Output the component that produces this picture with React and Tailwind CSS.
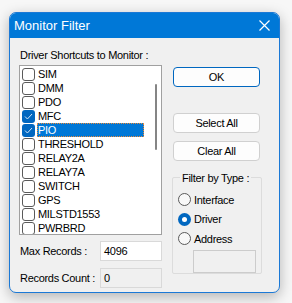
const drivers = [
  { name: "SIM" },
  { name: "DMM" },
  { name: "PDO" },
  { name: "MFC", checked: true },
  { name: "PIO", checked: true, selected: true },
  { name: "THRESHOLD" },
  { name: "RELAY2A" },
  { name: "RELAY7A" },
  { name: "SWITCH" },
  { name: "GPS" },
  { name: "MILSTD1553" },
  { name: "PWRBRD" },
];

function CheckBox({ checked }) {
  if (checked) {
    return (
      <div className="w-[13px] h-[13px] shrink-0 rounded-[3px] bg-[#0067c0] flex items-center justify-center">
        <svg width="9" height="7" viewBox="0 0 9 7">
          <path d="M1 3.5 L3.4 6 L8 1" fill="none" stroke="#cfe3f5" strokeWidth="1" />
        </svg>
      </div>
    );
  }
  return <div className="w-[13px] h-[13px] shrink-0 rounded-[3px] border border-[#5a5a5a] bg-white" />;
}

function Radio({ label, checked }) {
  return (
    <div className="flex items-center h-[19.5px]">
      {checked ? (
        <div className="w-[13px] h-[13px] rounded-full bg-[#0067c0] flex items-center justify-center">
          <div className="w-[5px] h-[5px] rounded-full bg-white" />
        </div>
      ) : (
        <div className="w-[13px] h-[13px] rounded-full border border-[#5a5a5a] bg-[#f8f8f8]" />
      )}
      <span className="ml-[3px]">{label}</span>
    </div>
  );
}

function Btn({ children, primary, className = "" }) {
  return (
    <div
      className={`h-[20px] w-[87px] rounded-[4px] flex items-center justify-center bg-[#fdfdfd] ${
        primary ? "border-[1.5px] border-[#0067c0]" : "border border-[#d0d0d0]"
      } ${className}`}
    >
      {children}
    </div>
  );
}

export default function App() {
  return (
    <div
      className="w-[292px] h-[303px] bg-[#f7f7f7] pt-[12px] pl-[9px] text-[11px] tracking-[-0.3px] whitespace-nowrap text-black leading-[14px]"
      style={{ fontFamily: '"Liberation Sans", Arial, sans-serif' }}
    >
      <div className="w-[271px] h-[281px] rounded-[7px] border border-[#1b79d6] bg-[#f0f0f0] overflow-hidden shadow-[0_4px_14px_rgba(0,0,0,0.28)]">
        {/* Title bar */}
        <div className="h-[25px] bg-[#0078d7] flex items-center justify-between pl-[4px] pr-[9px] text-white text-[13px] tracking-normal">
          <span>Monitor Filter</span>
          <svg width="11" height="11" viewBox="0 0 11 11">
            <path d="M0.5 0.5 L10.5 10.5 M10.5 0.5 L0.5 10.5" stroke="white" strokeWidth="1.2" />
          </svg>
        </div>

        <div className="flex pl-[9px]">
          {/* Left column */}
          <div className="w-[143px]">
            <div className="mt-[10px] pl-[1px] h-[14px]">Driver Shortcuts to Monitor :</div>
            <div className="mt-[3px] h-[170px] border border-[#a0a0a0] bg-white flex overflow-hidden">
              <div className="flex-1 pl-[2px] pt-[1px]">
                {drivers.map((d) => (
                  <div key={d.name} className="h-[14px] flex items-center">
                    <CheckBox checked={d.checked} />
                    <span
                      className={`ml-[2px] h-[14px] flex items-center pl-[1px] ${
                        d.selected
                          ? "w-[107px] bg-[#0078d7] text-white outline-dotted outline-1 outline-[#e98a3a] -outline-offset-1"
                          : ""
                      }`}
                    >
                      {d.name}
                    </span>
                  </div>
                ))}
              </div>
              <div className="w-[10px] pt-[18px] flex justify-center">
                <div className="w-[2px] h-[66px] rounded-full bg-[#858585]" />
              </div>
            </div>
            <div className="mt-[6px] h-[20px] flex items-center">
              <span className="w-[81px] pl-[1px]">Max Records :</span>
              <div className="flex-1 h-[20px] bg-white border border-[#d9d9d9] flex items-center pl-[3px]">4096</div>
            </div>
            <div className="mt-[7px] h-[20px] flex items-center">
              <span className="w-[81px] pl-[1px]">Records Count :</span>
              <div className="flex-1 h-[20px] bg-[#f0f0f0] border border-[#d9d9d9] flex items-center pl-[3px]">0</div>
            </div>
          </div>

          {/* Right column */}
          <div className="ml-[10px] w-[90px] flex flex-col">
            <Btn primary className="mt-[29px] ml-[1px]">OK</Btn>
            <Btn className="mt-[26px] ml-[1px]">Select All</Btn>
            <Btn className="mt-[8px] ml-[1px]">Clear All</Btn>
            <div className="mt-[10px] relative h-[103px]">
              <div className="absolute left-0 right-0 top-[6px] bottom-0 border border-[#dcdcdc] rounded-[2px]" />
              <div className="relative ml-[8px] px-[2px] w-fit bg-[#f0f0f0] h-[14px]">Filter by Type :</div>
              <div className="relative mt-[5px] pl-[6px] flex flex-col">
                <Radio label="Interface" />
                <Radio label="Driver" checked />
                <Radio label="Address" />
                <div className="ml-[15px] mt-[1px] w-[63px] h-[23px] border border-[#cccccc] bg-[#f0f0f0]" />
              </div>
            </div>
          </div>
        </div>
      </div>
    </div>
  );
}
